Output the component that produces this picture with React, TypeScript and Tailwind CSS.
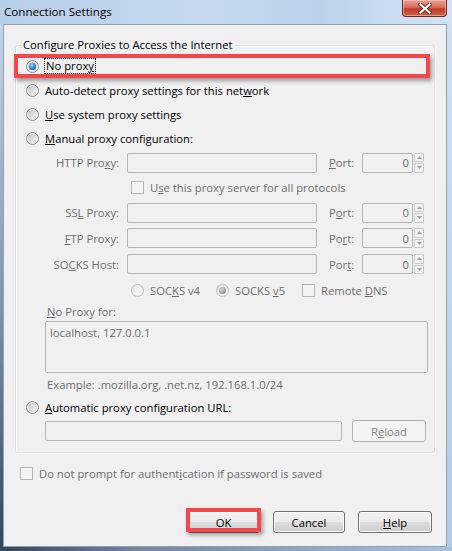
import type { ReactNode } from "react";
import clsx from "clsx";

const TEXT = "text-black";
const DIM = "text-[#6d6d6d]";

function Radio({ checked = false, disabled = false }: { checked?: boolean; disabled?: boolean }) {
  return (
    <span
      className={clsx(
        "flex h-[13px] w-[13px] shrink-0 items-center justify-center rounded-full border",
        disabled
          ? "border-[#bcbcbc] bg-[linear-gradient(135deg,#e6e6e6,#f8f8f8)]"
          : "border-[#8e8f8f] bg-[linear-gradient(135deg,#c4c4c4,#f6f6f6)] shadow-[inset_0_0_0_1px_#f3f3f3]"
      )}
    >
      {checked && (
        <span
          className={clsx(
            "h-[7px] w-[7px] rounded-full",
            disabled
              ? "bg-[radial-gradient(circle_at_40%_35%,#d8d8d8_0%,#9c9c9c_60%,#7c7c7c_100%)]"
              : "bg-[radial-gradient(circle_at_40%_35%,#a6e1ff_0%,#2f8ad2_45%,#0e3f6e_100%)]"
          )}
        />
      )}
    </span>
  );
}

function Check({ disabled = false }: { disabled?: boolean }) {
  return (
    <span
      className={clsx(
        "block h-[13px] w-[13px] shrink-0 border",
        disabled
          ? "border-[#b6b6b6] bg-[#f4f4f4]"
          : "border-[#8e8f8f] bg-[linear-gradient(135deg,#dcdcdc,#ffffff)]"
      )}
    />
  );
}

function Box({ className }: { className?: string }) {
  return <div className={clsx("rounded-[2px] border border-[#b5b5b5] bg-[#f0f0f0]", className)} />;
}

function Spin() {
  return (
    <div className="flex h-[20px]">
      <div className="flex w-[51px] items-center justify-end rounded-[2px] border border-[#b5b5b5] bg-[#f0f0f0] pr-[3px] text-[#6d6d6d]">
        0
      </div>
      <div className="ml-[1px] flex w-[10px] flex-col gap-[1px]">
        <div className="flex flex-1 items-center justify-center rounded-[1px] border border-[#cacaca] bg-[#f4f4f4]">
          <svg width="5" height="3" viewBox="0 0 5 3">
            <path d="M0 3 L2.5 0 L5 3 Z" fill="#a0a0a0" />
          </svg>
        </div>
        <div className="flex flex-1 items-center justify-center rounded-[1px] border border-[#cacaca] bg-[#f4f4f4]">
          <svg width="5" height="3" viewBox="0 0 5 3">
            <path d="M0 0 L5 0 L2.5 3 Z" fill="#a0a0a0" />
          </svg>
        </div>
      </div>
    </div>
  );
}

function Btn({ children, className, disabled = false }: { children: ReactNode; className?: string; disabled?: boolean }) {
  return (
    <div
      className={clsx(
        "flex h-[22px] items-center justify-center rounded-[3px] border",
        disabled
          ? "border-[#adb2b5] bg-[#f4f4f4] text-[#838383]"
          : "border-[#707070] bg-[linear-gradient(180deg,#f2f2f2_0%,#ebebeb_50%,#dddddd_50%,#cfcfcf_100%)] text-black shadow-[inset_0_0_0_1px_#fbfbfb]",
        className
      )}
    >
      {children}
    </div>
  );
}

const proxies: { label: ReactNode; port: ReactNode; h: string }[] = [
  { label: <>HTTP Pro<u>x</u>y:</>, port: <><u>P</u>ort:</>, h: "h-[25px]" },
  { label: <>SS<u>L</u> Proxy:</>, port: <>P<u>o</u>rt:</>, h: "h-[25px]" },
  { label: <><u>F</u>TP Proxy:</>, port: <>Po<u>r</u>t:</>, h: "h-[26px]" },
  { label: <>SO<u>C</u>KS Host:</>, port: <>Por<u>t</u>:</>, h: "h-[26px]" },
];

function ProxyRow({ label, port, h }: { label: ReactNode; port: ReactNode; h: string }) {
  return (
    <div className={clsx("flex items-center", h, DIM)}>
      <div className="w-[103px] text-right">{label}</div>
      <Box className="ml-[8px] h-[20px] w-[190px]" />
      <div className="ml-[12px] w-[33px]">{port}</div>
      <Spin />
    </div>
  );
}

export default function App() {
  return (
    <div className="flex h-[551px] w-[452px] flex-col overflow-hidden bg-[#b4cce6] font-['Open_Sans',sans-serif] text-[11.25px] leading-[15px]">
      {/* title bar */}
      <div className="flex h-[24px] shrink-0 items-start justify-between bg-[linear-gradient(90deg,#b7cee8_0%,#c6d9ee_45%,#bcd2ea_70%,#d3e3f3_100%)]">
        <span className="pl-[4px] pt-[4px] text-[11.6px] text-black">Connection Settings</span>
        <div className="mr-[5px] flex h-[17px] w-[45px] items-center justify-center rounded-b-[4px] border border-t-0 border-[#6b2a24] bg-[linear-gradient(180deg,#eba092_0%,#d9705e_45%,#c23c28_55%,#d0604a_100%)] shadow-[inset_0_0_0_1px_rgba(255,220,210,0.5)]">
          <svg width="14" height="11" viewBox="0 0 14 11">
            <path d="M2.5 1.5 L11.5 9.5 M11.5 1.5 L2.5 9.5" stroke="#5a2a24" strokeWidth="4" strokeLinecap="square" />
            <path d="M2.5 1.5 L11.5 9.5 M11.5 1.5 L2.5 9.5" stroke="#ffffff" strokeWidth="2.2" strokeLinecap="square" />
          </svg>
        </div>
      </div>

      <div className="flex flex-1">
        <div className="w-[3px] bg-[linear-gradient(180deg,#c3d5e8_0%,#7d93aa_55%,#33465a_100%)]" />
        {/* client area */}
        <div className="flex w-[444px] flex-col border border-[#8ea2b7] bg-[#f0f0f0]">
          {/* group box */}
          <div className="relative ml-[11px] mt-[20px] h-[408px] w-[420px] rounded-[3px] border border-[#d5dfe5] pt-[8px] shadow-[inset_1px_1px_0_#ffffff,1px_1px_0_#ffffff]">
            <span className={clsx("absolute -top-[9px] left-[5px] bg-[#f0f0f0] px-[2px] leading-[16px]", TEXT)}>
              Configure Proxies to Access the Internet
            </span>

            <div className={clsx("relative flex h-[24px] items-center gap-[5px] pl-[10px]", TEXT)}>
              <Radio checked />
              <span className="border border-dotted border-black px-[1px] leading-[14px]">
                No prox<u>y</u>
              </span>
              <div className="pointer-events-none absolute -left-[2px] right-[4px] top-0 bottom-0 border-[4px] border-[#f2474c] shadow-[2px_3px_4px_rgba(0,0,0,0.35)]" />
            </div>
            <div className={clsx("flex h-[24px] items-center gap-[6px] pl-[10px]", TEXT)}>
              <Radio />
              <span>
                Auto-detect proxy settings for this net<u>w</u>ork
              </span>
            </div>
            <div className={clsx("flex h-[24px] items-center gap-[6px] pl-[10px]", TEXT)}>
              <Radio />
              <span>
                <u>U</u>se system proxy settings
              </span>
            </div>
            <div className={clsx("flex h-[24px] items-center gap-[6px] pl-[10px]", TEXT)}>
              <Radio />
              <span>
                <u>M</u>anual proxy configuration:
              </span>
            </div>

            <ProxyRow {...proxies[0]} />
            <div className={clsx("flex h-[25px] items-center gap-[6px] pl-[115px]", DIM)}>
              <Check disabled />
              <span>
                U<u>s</u>e this proxy server for all protocols
              </span>
            </div>
            {proxies.slice(1).map((p, i) => (
              <ProxyRow key={i} {...p} />
            ))}

            <div className={clsx("flex h-[26px] items-center pl-[115px]", DIM)}>
              <div className="flex w-[85px] items-center gap-[6px]">
                <Radio disabled />
                <span>
                  SOC<u>K</u>S v4
                </span>
              </div>
              <div className="flex w-[86px] items-center gap-[6px]">
                <Radio checked disabled />
                <span>
                  SOCKS <u>v</u>5
                </span>
              </div>
              <div className="flex items-center gap-[6px]">
                <Check disabled />
                <span>
                  Remote <u>D</u>NS
                </span>
              </div>
            </div>

            <div className={clsx("flex h-[16px] items-center pl-[31px]", DIM)}>
              <span>
                <u>N</u>o Proxy for:
              </span>
            </div>
            <div className="ml-[29px] mt-[2px] h-[52px] w-[383px] rounded-[2px] border border-[#b5b5b5] bg-[#f0f0f0] px-[4px] pt-[3px] text-[#6d6d6d]">
              localhost, 127.0.0.1
            </div>
            <div className={clsx("flex h-[22px] items-center pl-[31px]", DIM)}>
              Example: .mozilla.org, .net.nz, 192.168.1.0/24
            </div>

            <div className={clsx("flex h-[24px] items-center gap-[6px] pl-[10px]", TEXT)}>
              <Radio />
              <span>
                <u>A</u>utomatic proxy configuration URL:
              </span>
            </div>
            <div className="flex h-[24px] items-center pl-[29px]">
              <Box className="h-[20px] w-[297px]" />
              <Btn disabled className="ml-[10px] w-[74px]">
                <span>
                  R<u>e</u>load
                </span>
              </Btn>
            </div>
          </div>

          <div className={clsx("ml-[16px] mt-[10px] flex h-[20px] items-center gap-[6px]", DIM)}>
            <Check disabled />
            <span>
              Do not prompt for authent<u>i</u>cation if password is saved
            </span>
          </div>

          <div className="mt-[28px] flex justify-end gap-[13px] pr-[14px]">
            <div className="relative">
              <Btn className="w-[73px]">OK</Btn>
              <div className="pointer-events-none absolute -left-[1px] -right-[1px] -top-[3px] bottom-[1px] border-[4px] border-[#f2474c] shadow-[2px_3px_4px_rgba(0,0,0,0.35)]" />
            </div>
            <Btn className="w-[72px]">Cancel</Btn>
            <Btn className="w-[74px]">
              <span>
                <u>H</u>elp
              </span>
            </Btn>
          </div>
        </div>
        <div className="w-[5px] bg-[linear-gradient(180deg,#d0e0f1_0%,#b3cbe6_100%)]" />
      </div>
      <div className="h-[4px] shrink-0 bg-[linear-gradient(90deg,#33465a_0%,#6f87a0_30%,#a9c3df_100%)]" />
    </div>
  );
}
